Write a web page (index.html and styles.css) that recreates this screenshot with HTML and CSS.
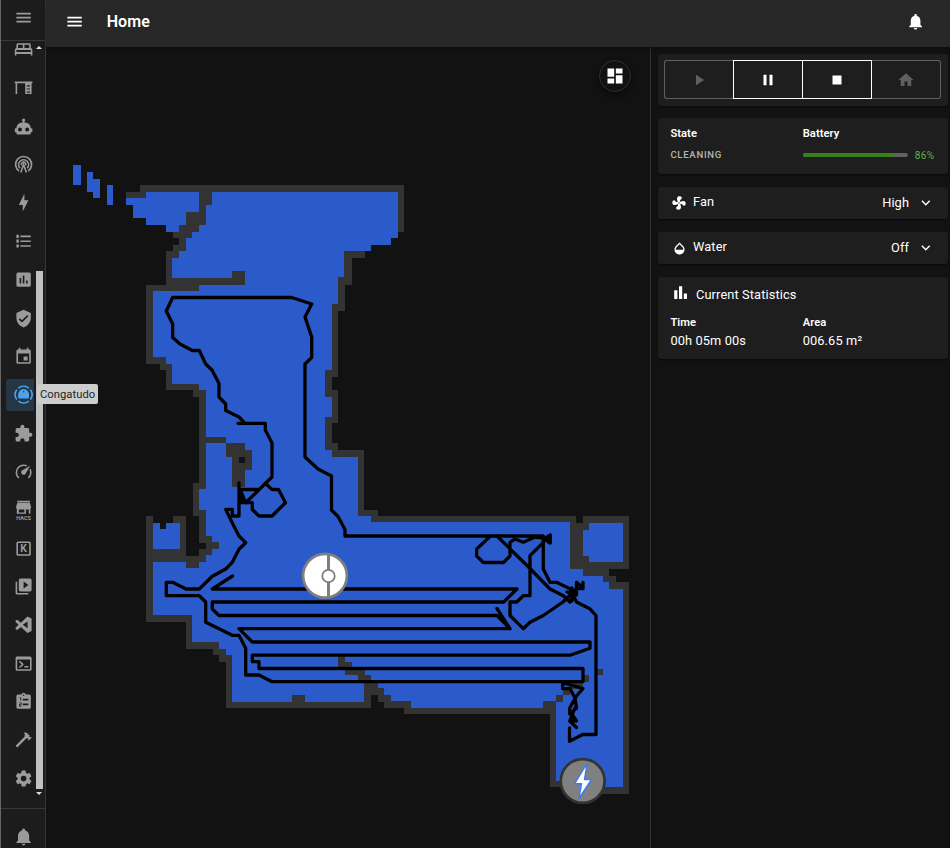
FILE: index.html
```html
<!DOCTYPE html>
<html lang="en">
<head>
<meta charset="utf-8">
<title>Home</title>
<link rel="stylesheet" href="styles.css">
</head>
<body>
<div class="app">
  <nav class="sidebar">
    <div class="menu-top"><svg class="icon" viewBox="0 0 24 24"><path d="M3 6h18v2H3V6m0 5h18v2H3v-2m0 5h18v2H3v-2Z"/></svg></div>
    <div class="nav-list">
      <ul class="items">
        <li><svg class="icon" viewBox="0 0 24 24"><path fill-rule="evenodd" d="M5 4h14a2 2 0 0 1 2 2v4a2.500 2.500 0 0 1 2 2.500v7h-2v-2H3v2H1v-7a2.500 2.500 0 0 1 2-2.500V6a2 2 0 0 1 2-2m0 2v4h6V6H5m8 0v4h6V6h-6M3 12.500v2.500h18v-2.500H3Z"/></svg></li>
        <li><svg class="icon" viewBox="0 0 24 24"><path fill-rule="evenodd" d="M1 4.500h22v2h-1V20h-8V6.500H4V20H2V6.500H1V4.500m15 4.500v1.500h4V9h-4m0 4v1.500h4V13h-4m0 4v1.500h4V17h-4Z"/></svg></li>
        <li><svg class="icon" viewBox="0 0 24 24"><path d="M12,2A2,2 0 0,1 14,4C14,4.740 13.600,5.390 13,5.730V7H14A7,7 0 0,1 21,14H22A1,1 0 0,1 23,15V18A1,1 0 0,1 22,19H21V20A2,2 0 0,1 19,22H5A2,2 0 0,1 3,20V19H2A1,1 0 0,1 1,18V15A1,1 0 0,1 2,14H3A7,7 0 0,1 10,7H11V5.730C10.400,5.390 10,4.740 10,4A2,2 0 0,1 12,2M7.500,13A2.500,2.500 0 0,0 5,15.500A2.500,2.500 0 0,0 7.500,18A2.500,2.500 0 0,0 10,15.500A2.500,2.500 0 0,0 7.500,13M16.500,13A2.500,2.500 0 0,0 14,15.500A2.500,2.500 0 0,0 16.500,18A2.500,2.500 0 0,0 19,15.500A2.500,2.500 0 0,0 16.500,13Z"/></svg></li>
        <li><svg class="icon line" viewBox="0 0 24 24"><path d="M6.200 20A10 10 0 1 1 17.800 20M7.500 16.500A6.200 6.200 0 1 1 16.500 16.500M8.500 22L12 12L15.500 22M9.700 13A2.700 2.700 0 1 1 14.300 13"/></svg></li>
        <li><svg class="icon" viewBox="0 0 24 24"><path d="M11 15H6L13 1V9H18L11 23V15Z"/></svg></li>
        <li><svg class="icon" viewBox="0 0 24 24"><path d="M3 3.500h3v4H3v-4m5 1h13v2H8v-2m-5 5h3v4H3v-4m5 1h13v2H8v-2m-5 5h3v4H3v-4m5 1h13v2H8v-2"/></svg></li>
        <li><svg class="icon" viewBox="0 0 24 24"><path fill-rule="evenodd" d="M5 3h14a2 2 0 0 1 2 2v14a2 2 0 0 1-2 2H5a2 2 0 0 1-2-2V5a2 2 0 0 1 2-2M7 10v7h2v-7H7m4-3v10h2V7h-2m4 6v4h2v-4h-2Z"/></svg></li>
        <li><svg class="icon" viewBox="0 0 24 24"><path d="M10,17L6,13L7.410,11.590L10,14.170L16.590,7.580L18,9M12,1L3,5V11C3,16.550 6.840,21.740 12,23C17.160,21.740 21,16.550 21,11V5L12,1Z"/></svg></li>
        <li><svg class="icon" viewBox="0 0 24 24"><path d="M19,19H5V8H19M16,1V3H8V1H6V3H5C3.890,3 3,3.890 3,5V19A2,2 0 0,0 5,21H19A2,2 0 0,0 21,19V5C21,3.890 20.100,3 19,3H18V1M17,12H12V17H17V12Z"/></svg></li>
        <li class="active"><svg class="icon" viewBox="0 0 24 24"><path class="ring" d="M5.500 3.800A10.500 10.500 0 0 1 18.500 3.800M20.500 5.800A10.500 10.500 0 0 1 20.500 18.200M18.500 20.200A10.500 10.500 0 0 1 5.500 20.200M3.500 18.200A10.500 10.500 0 0 1 3.500 5.800"/><path fill-rule="evenodd" d="M12 5a7 7 0 0 1 6.800 7v3.500l-1.300 1.500h-11L5.200 15.500V12A7 7 0 0 1 12 5M11.200 7.500v1.600h1.600V7.500h-1.600Z"/></svg></li>
        <li><svg class="icon" viewBox="0 0 24 24"><path d="M20.500,11H19V7C19,5.890 18.100,5 17,5H13V3.500A2.500,2.500 0 0,0 10.500,1A2.500,2.500 0 0,0 8,3.500V5H4A2,2 0 0,0 2,7V10.800H3.500C5,10.800 6.200,12 6.200,13.500C6.200,15 5,16.200 3.500,16.200H2V20A2,2 0 0,0 4,22H7.800V20.500C7.800,19 9,17.800 10.500,17.800C12,17.800 13.200,19 13.200,20.500V22H17A2,2 0 0,0 19,20V16H20.500A2.500,2.500 0 0,0 23,13.500A2.500,2.500 0 0,0 20.500,11Z"/></svg></li>
        <li><svg class="icon" viewBox="0 0 24 24"><path d="M12,16A3,3 0 0,1 9,13C9,11.880 9.610,10.900 10.500,10.390L20.210,4.770L14.680,14.350C14.180,15.330 13.170,16 12,16M12,3C13.810,3 15.500,3.500 16.970,4.320L14.870,5.530C14,5.190 13,5 12,5A8,8 0 0,0 4,13C4,15.210 4.890,17.210 6.340,18.650C6.740,19.040 6.740,19.670 6.350,20.060C5.960,20.450 5.320,20.450 4.930,20.070C3.120,18.260 2,15.760 2,13A10,10 0 0,1 12,3M22,13C22,15.760 20.880,18.260 19.070,20.070C18.680,20.450 18.050,20.450 17.660,20.060C17.270,19.670 17.270,19.040 17.660,18.650C19.110,17.200 20,15.210 20,13C20,12 19.810,11 19.460,10.100L20.670,8C21.500,9.500 22,11.180 22,13Z"/></svg></li>
        <li><svg class="icon" viewBox="0 0 24 24"><path fill-rule="evenodd" d="M4 1h16v2H4V1m0 2.800h16l1.500 5.500v1H20.500v7h-17v-7H2.500v-1L4 3.800M6 12v3.500h7V12H6m9 0v5.300h3.500V12H15Z"/><text class="tiny" x="12" y="24.500" text-anchor="middle">HACS</text></svg></li>
        <li><svg class="icon" viewBox="0 0 24 24"><rect class="outline" x="4" y="4" width="16" height="16" rx="1"/><text class="letter" x="12" y="16.700" text-anchor="middle">K</text></svg></li>
        <li><svg class="icon" viewBox="0 0 24 24"><path d="M4,6H2V20A2,2 0 0,0 4,22H18V20H4V6M20,2H8A2,2 0 0,0 6,4V16A2,2 0 0,0 8,18H20A2,2 0 0,0 22,16V4A2,2 0 0,0 20,2M12,14.500V5.500L18,10L12,14.500Z"/></svg></li>
        <li><svg class="icon" viewBox="0 0 24 24"><path fill-rule="evenodd" d="M16.800 2L22 4.500V20L16.800 22.500L8.700 15L4 18.700L2 17.700V16L5.700 12.300L2 8.700V7L4 6L8.700 9.700L16.800 2M17 8L11 12.300L17 16.700V8Z"/></svg></li>
        <li><svg class="icon" viewBox="0 0 24 24"><path d="M20,19V7H4V19H20M20,3A2,2 0 0,1 22,5V19A2,2 0 0,1 20,21H4A2,2 0 0,1 2,19V5C2,3.890 2.900,3 4,3H20M13,17V15H18V17H13M9.580,13L5.570,9H8.400L11.700,12.300C12.090,12.690 12.090,13.330 11.700,13.720L8.420,17H5.590L9.580,13Z"/></svg></li>
        <li><svg class="icon" viewBox="0 0 24 24"><path fill-rule="evenodd" d="M5 3h4.200a3 3 0 0 1 5.600 0H19a2 2 0 0 1 2 2v14a2 2 0 0 1-2 2H5a2 2 0 0 1-2-2V5a2 2 0 0 1 2-2m7 0a1 1 0 0 0 0 2a1 1 0 0 0 0-2M7 7v1h1v3h1V7H7m4 1.500v2h7v-2h-7M6.500 13v1h2v1h-2v3h3v-1h-2v-1h2v-3h-3m4.500 1.500v2h7v-2h-7Z"/></svg></li>
        <li><svg class="icon" viewBox="0 0 24 24"><path d="M2 19.630L13.430 8.200L12.720 7.500L14.140 6.070L12 3.890C13.200 2.700 15.090 2.700 16.270 3.890L19.870 7.500L18.450 8.910H21.290L22 9.620L18.450 13.210L17.740 12.500V9.620L16.270 11.040L15.560 10.330L4.130 21.760L2 19.630Z"/></svg></li>
        <li><svg class="icon" viewBox="0 0 24 24"><path d="M12,15.500A3.500,3.500 0 0,1 8.500,12A3.500,3.500 0 0,1 12,8.500A3.500,3.500 0 0,1 15.500,12A3.500,3.500 0 0,1 12,15.500M19.430,12.970C19.470,12.650 19.500,12.330 19.500,12C19.500,11.670 19.470,11.340 19.430,11L21.540,9.370C21.730,9.220 21.780,8.950 21.660,8.730L19.660,5.270C19.540,5.050 19.270,4.960 19.050,5.050L16.560,6.050C16.040,5.660 15.500,5.320 14.870,5.070L14.500,2.420C14.460,2.180 14.250,2 14,2H10C9.750,2 9.540,2.180 9.500,2.420L9.130,5.070C8.500,5.320 7.960,5.660 7.440,6.050L4.950,5.050C4.730,4.960 4.460,5.050 4.340,5.270L2.340,8.730C2.210,8.950 2.270,9.220 2.460,9.370L4.570,11C4.530,11.340 4.500,11.670 4.500,12C4.500,12.330 4.530,12.650 4.570,12.970L2.460,14.630C2.270,14.780 2.210,15.050 2.340,15.270L4.340,18.730C4.460,18.950 4.730,19.030 4.950,18.950L7.440,17.940C7.960,18.340 8.500,18.680 9.130,18.930L9.500,21.580C9.540,21.820 9.750,22 10,22H14C14.250,22 14.460,21.820 14.500,21.580L14.870,18.930C15.500,18.670 16.040,18.340 16.560,17.940L19.050,18.950C19.270,19.030 19.540,18.950 19.660,18.730L21.660,15.270C21.780,15.050 21.730,14.780 21.540,14.630L19.430,12.970Z"/></svg></li>
      </ul>
      <div class="scroll"><i class="up"></i><i class="thumb"></i><i class="down"></i></div>
      <span class="tooltip">Congatudo</span>
    </div>
    <div class="menu-bottom"><svg class="icon" viewBox="0 0 24 24"><path d="M21,19V20H3V19L5,17V11C5,7.900 7.030,5.170 10,4.290V4A2,2 0 0,1 14,4V4.290C16.970,5.170 19,7.900 19,11V17L21,19M14,21A2,2 0 0,1 10,21"/></svg></div>
  </nav>
  <div class="page">
    <header class="bar">
      <svg class="bar-icon" viewBox="0 0 24 24"><path d="M3 18h18v-2H3v2zm0-5h18v-2H3v2zm0-7v2h18V6H3z"/></svg>
      <h1>Home</h1>
      <svg class="bar-icon" viewBox="0 0 24 24"><path d="M12 22c1.100 0 2-.9 2-2h-4c0 1.100.890 2 2 2zm6-6v-5c0-3.070-1.640-5.640-4.500-6.320V4c0-.830-.670-1.500-1.500-1.500s-1.500.670-1.500 1.500v.680C7.630 5.360 6 7.920 6 11v5l-2 2v1h16v-1l-2-2z"/></svg>
    </header>
    <main class="content">
      <section class="map">
        <svg class="map-canvas" viewBox="46 47 604 801">
          <g shape-rendering="crispEdges">
            <path class="wall" d="M126 192H139.500V185.300H404.300V232H398V238H391V244.700H371V251H364.500V258H351.700V285H345V311H338V377H332V390H338V423H331.700V443H338V450H364V510H378V516H576V522.500H583V516H629V569H609V576H615.700V582.300H629V794H590V787.300H550V714.300H404.300V708H384V701.500H378V695H371V708H226V661.500H219V655H212.500V648.700H186V621.500H146V516H153V522.600H160V529.300H166V522.600H172.500V516H186V555.500H199V549H205.700V542.500H199V516H192.500V483H199V396.700H192.500V390H166V370H160V363.700H146V284.700H166V251H172.700V244.700H179.300V238H172.700V231.700H166V224.700H146V218H133V204.700H126Z"/>
            <path class="floor" d="M73 165.300H80.500V185.300H73ZM87 172H93V178.500H99.700V198H93V192H87ZM107 185.300H113V204.700H107ZM126 198H146V192H199V211.700H186V224.700H179.300V231.700H166V224.700H146V218H133V204.700H126Z"/>
            <path class="floor" d="M212.400 192H398V238H391V244.700H371V251H344.400V277.400H338V304H331.500V370H325V397H331.500V417H325V450H332V457H358V516H371V522.400H570V569H583V576H603V582.300H609V589H623V787.300H590V781H556.400V701.400H543V708H411V701.400H391V695H384V688.400H378V682H364.400V702H305V695H291.700V702H232.400V655H226V648.700H219V642H192.400V615.400H153V562H186V568.400H199V562H205.700V555.400H212.400V549H219V542.400H212.400V536H205.700V510H199V489.400H205.700V390H199V384H172.400V363.700H166V357.300H153V290.700H199V284.700H245V271H232V277.500H172.400V258H179.300V251H186V238H192.400V231.700H199V224.700H205.700V204.700H212.400Z"/>
            <path class="floor" d="M153 522.600H160V529.300H166V522.600H179.700V549H153ZM589 522.500H623V562.300H589V555.700H583V529.700H589Z"/>
            <path class="wall" d="M205 436.700H226V443H245V450H252V470H245V487H232V457H226V443H205ZM338 655H344.500V662H351.500V668.500H364.500V675H371V682H378V688H364.500V682H358V675H344.500V668.500H338ZM597 668.500H603V675H597ZM583 675H589V682H583ZM570 682H583V688.500H570ZM563 688.500H570V695H563ZM556.300 695H563V701.500H556.300Z"/>
            <path class="void" d="M239 457H245V463H239Z"/>
          </g>
          <g class="track">
            <path d="M238 423.300H265.300V430L272 443V477L245.700 502.700L240 489.500H259M239 483V516H232.300V509.300H225.700L232.300 523L239 536L245.700 542.700L239 549.300L232.300 562.300L225.700 569L212 576.500L199.300 589H186L172.700 582.300H166.300V595.700H199.300L205.700 602V622.300L232.300 635.300H239L245.700 648.300V675H259L272 681.700H583V668.500H259V661.700H252.300V655.200H570L590 648.300V642H252.300L239 628.700H510L497 608.500M510 628.700L497 615.500H219L212.300 609V602H503.700L517 589H212.300L232.500 576"/>
            <path d="M245 423.300L239 417L225.700 410.500V404L219 397V383.500L212 370L205.700 364L199.300 350.500H192.300L180 344L172.700 337.500V324L166.300 311L172.700 297.500H291.700L311.700 304L305 317L311.700 337V357.500L305 364V457L318 469L331.500 476V510L338 516.500L345 529.500V536H543.300V569L550 582.300H556.500L570 588.700L576.500 602L589.700 608.700L596 615.500V734.500H582.700L569.500 741.300V728"/>
            <path d="M265.300 483.300L272 489.500H278.500L285.500 502.700L272 516H259L252.300 509.500V502.700H240"/>
            <path d="M490 536.500L476.700 549V556L483.300 562.500H503.500L510 556V542.300L515 539L523.300 542.300L535 537L543 538M497 536L530 568.500L550 589L563.300 595.700L570 602L576.500 588.700H583V582.300V588L576.500 582.300V595L567 592M543.300 542.500L530 555.700V595.700H523.300L516.700 602H510V615.500L523.300 628.700L530 622.300L543.300 615.500L563 602L576.500 588.700M572 588V601"/>
            <path class="solid" d="M544 539L550.300 535V543ZM240 490V502H245Z"/>
            <path d="M562.700 683.300V688.700H570L575 698L576.500 708L569.700 714V708L576.500 696L583 688.500L563 682.800M570.500 712L576.500 721H569.700L576.500 727.500M575 708L569.700 721"/>
          </g>
          <circle class="robot" cx="325" cy="575.800" r="21.900"/>
          <path class="robot-line" d="M328.500 554.500V597"/>
          <circle class="robot-eye" cx="328.500" cy="576" r="6.200"/>
          <circle class="dock" cx="582.700" cy="781" r="21.900"/>
          <path class="dock-bolt" d="M587 763.500L574.700 783.700H581.500L579 798.500L591.500 779.500H584.500Z"/>
        </svg>
        <button class="fab"><svg viewBox="0 0 24 24"><path d="M3 13h8V3H3v10zm0 8h8v-6H3v6zm10 0h8V11h-8v10zm0-18v6h8V3h-8z"/></svg></button>
      </section>
      <aside class="panel">
        <div class="card controls">
          <div class="buttons">
            <button><svg viewBox="0 0 24 24"><path d="M8 5v14l11-7z"/></svg></button>
            <button class="on"><svg viewBox="0 0 24 24"><path d="M6 19h4V5H6v14zm8-14v14h4V5h-4z"/></svg></button>
            <button class="on"><svg viewBox="0 0 24 24"><path d="M6 6h12v12H6z"/></svg></button>
            <button><svg viewBox="0 0 24 24"><path d="M10 20v-6h4v6h5v-8h3L12 3 2 12h3v8z"/></svg></button>
          </div>
        </div>
        <div class="card status">
          <div class="col"><b>State</b><span class="state">CLEANING</span></div>
          <div class="col"><b>Battery</b><div class="battery"><div class="meter"><i style="width:86%"></i></div><span>86%</span></div></div>
        </div>
        <div class="card row">
          <svg class="row-icon" viewBox="0 0 24 24"><path d="M12,11A1,1 0 0,0 11,12A1,1 0 0,0 12,13A1,1 0 0,0 13,12A1,1 0 0,0 12,11M12.500,2C17,2 17.110,5.570 14.750,6.750C13.760,7.240 13.320,8.290 13.130,9.220C13.610,9.420 14.030,9.730 14.350,10.130C18.050,8.130 22.030,8.920 22.030,12.500C22.030,17 18.460,17.100 17.280,14.730C16.780,13.740 15.720,13.300 14.790,13.110C14.590,13.590 14.280,14 13.880,14.340C15.870,18.030 15.080,22 11.500,22C7,22 6.910,18.420 9.270,17.240C10.250,16.750 10.690,15.710 10.890,14.790C10.400,14.590 9.970,14.270 9.650,13.870C5.960,15.850 2,15.070 2,11.500C2,7 5.560,6.890 6.740,9.260C7.240,10.250 8.290,10.680 9.220,10.870C9.410,10.390 9.730,9.970 10.140,9.650C8.150,5.960 8.940,2 12.500,2Z"/></svg>
          <span class="name">Fan</span><span class="value">High</span>
          <svg class="chevron" viewBox="0 0 24 24"><path d="M16.590 8.590 12 13.170 7.410 8.590 6 10l6 6 6-6z"/></svg>
        </div>
        <div class="card row">
          <svg class="row-icon drop" viewBox="0 0 24 24"><path d="M17.660 8L12 2.350 6.340 8C4.780 9.560 4 11.640 4 13.640s.780 4.110 2.340 5.670 3.610 2.350 5.660 2.350 4.100-.790 5.660-2.350S20 15.640 20 13.640 19.220 9.560 17.660 8zM6 14c.010-2 .620-3.270 1.760-4.400L12 5.270l4.240 4.380C17.380 10.770 17.990 12 18 14H6z"/></svg>
          <span class="name">Water</span><span class="value">Off</span>
          <svg class="chevron" viewBox="0 0 24 24"><path d="M16.590 8.590 12 13.170 7.410 8.590 6 10l6 6 6-6z"/></svg>
        </div>
        <div class="card stats">
          <div class="stats-head"><svg viewBox="0 0 24 24"><path d="M4 9h4v11H4zm12 4h4v7h-4zm-6-9h4v16h-4z"/></svg><span>Current Statistics</span></div>
          <div class="stats-cols">
            <div class="col"><b>Time</b><span>00h 05m 00s</span></div>
            <div class="col"><b>Area</b><span>006.65 m²</span></div>
          </div>
        </div>
      </aside>
    </main>
  </div>
</div>
</body>
</html>
```
FILE: styles.css
```css
* { box-sizing: border-box; }
body { margin: 0; background: #121212; color: #fff; font-family: Roboto, "Liberation Sans", sans-serif; overflow: hidden; }
button { font: inherit; color: inherit; padding: 0; background: none; }
svg { display: block; fill: currentColor; }
.app { display: flex; width: 950px; height: 848px; }

.sidebar { width: 46px; flex: none; display: flex; flex-direction: column; background: #1c1c1c; border-left: 1px solid #666; border-right: 1px solid #373737; color: #9b9b9b; }
.icon { width: 19.200px; height: 19.200px; overflow: visible; }
.line { fill: none; stroke: currentColor; stroke-width: 2; }
.ring { fill: none; stroke: currentColor; stroke-width: 2; }
.outline { fill: none; stroke: currentColor; stroke-width: 2; }
.letter { font: bold 13px Roboto, sans-serif; }
.tiny { font: bold 7px Roboto, sans-serif; }
.menu-top { height: 41px; flex: none; padding: 8px 0 0 13px; border-bottom: 1px solid #373737; }
.nav-list { position: relative; flex: 1; min-height: 0; display: flex; overflow: visible; }
.items { list-style: none; margin: 0; padding: 0 0 0 5px; width: 33px; height: 767px; overflow: hidden; }
.items li { width: 28px; height: 32px; margin-bottom: 6.350px; padding: 6.400px 0 0 8px; border-radius: 3px 0 0 3px; }
.items li:first-child { margin-top: -7.300px; }
.items .active { background: #263644; color: #4ba3ef; }
.scroll { width: 11px; display: flex; flex-direction: column; align-items: center; margin-left: -.5px; }
.up { margin-top: 5px; border: 3px solid transparent; border-top: 0; border-bottom: 3px solid #ddd; }
.thumb { width: 7px; height: 518px; margin-top: 222px; background: #c1c1c1; }
.down { margin-top: 3px; border: 3px solid transparent; border-bottom: 0; border-top: 3px solid #ddd; }
.tooltip { position: absolute; left: 36px; top: 343px; height: 20px; line-height: 21px; padding: 0 3px; border-radius: 2px; background: #cdcdcd; color: #252525; font-size: 11.200px; letter-spacing: .05px; }
.menu-bottom { height: 40px; flex: none; border-top: 1px solid #373737; padding: 18px 0 0 13px; }

.page { flex: 1; display: flex; flex-direction: column; min-width: 0; }
.bar { position: relative; z-index: 1; height: 47px; flex: none; display: flex; align-items: center; padding: 0 25px 4px 19px; background: #272727; box-shadow: 0 2px 4px rgba(0,0,0,.35); }
.bar h1 { flex: 1; margin: 0 0 0 22.500px; font-size: 16px; font-weight: 600; letter-spacing: .08px; line-height: 20px; }
.bar-icon { width: 19.200px; height: 19.200px; }
.content { flex: 1; display: flex; min-height: 0; }
.map { position: relative; width: 604px; flex: none; }
.map-canvas { width: 604px; height: 801px; }
.wall { fill: #333; }
.floor { fill: #2b5bca; }
.void { fill: #121212; }
.track { fill: none; stroke: #000; stroke-width: 3.300; stroke-linecap: round; stroke-linejoin: round; }
.track .solid { fill: #000; }
.robot { fill: #fff; stroke: #7f7f7f; stroke-width: 2.700; }
.robot-line { fill: none; stroke: #7f7f7f; stroke-width: 3; }
.robot-eye { fill: #fff; stroke: #7f7f7f; stroke-width: 1.800; }
.dock { fill: #808080; stroke: #333; stroke-width: 2.700; }
.dock-bolt { fill: #fff; stroke: #3c7cf2; stroke-width: 1.400; }
.fab { position: absolute; left: 553px; top: 13px; width: 32px; height: 32px; border: 1px solid #2e2e2e; border-radius: 50%; background: #121212; display: grid; place-items: center; box-shadow: 0 3px 6px rgba(0,0,0,.5); }
.fab svg { width: 20px; height: 20px; margin-left: .5px; }

.panel { flex: 1; display: flex; flex-direction: column; gap: 13px; border-left: 1px solid #323232; padding: 7px 2px 0 7px; font-size: 12.800px; letter-spacing: .12px; }
.card { background: #1e1e1e; border-radius: 3px; box-shadow: 0 1px 2px rgba(0,0,0,.55); }
.controls { height: 52px; padding: 6px 7px 0 6px; }
.buttons { display: grid; grid-template-columns: 70px 69px 69px 69px; height: 39px; }
.buttons button { display: grid; place-items: center; border: 1px solid #606060; color: #606060; }
.buttons button:first-child { border-radius: 3px 0 0 3px; border-right: 0; }
.buttons button:last-child { border-radius: 0 3px 3px 0; border-left: 0; }
.buttons .on { border-color: #fff; color: #fff; margin-left: -1px; }
.buttons svg { width: 18px; height: 18px; }
.buttons button:first-child svg { margin-right: 1.500px; }
.buttons .on svg { margin-left: .5px; }
.buttons button:last-child svg { margin-left: .5px; }
.col { display: flex; flex-direction: column; }
.col b { padding-top: 1px; font-size: 11.200px; font-weight: 600; line-height: 17px; letter-spacing: .04px; }
.status { height: 56px; margin-top: -1px; display: grid; grid-template-columns: 132.300px 1fr; padding: 6px 12px 6px 12.400px; }
.state { margin-top: 6px; font-size: 9.600px; font-weight: 500; line-height: 14px; color: #b4b4b4; letter-spacing: .7px; }
.battery { display: flex; align-items: center; margin-top: 6px; height: 14px; gap: 7px; font-size: 10px; color: #5fb04a; letter-spacing: .4px; }
.meter { width: 105px; height: 4px; border-radius: 2px; background: #616161; overflow: hidden; }
.meter i { display: block; height: 4px; background: #37801a; }
.row { height: 32px; display: flex; align-items: center; padding: 0 13.500px 0 13px; }
.row-icon { width: 16px; height: 16px; margin-right: 6px; }
.drop { width: 15px; height: 15px; margin: 1px 6px 0 1px; }
.name { flex: 1; padding-bottom: 3px; }
.value { padding-bottom: 1px; margin-right: 7.800px; }
.chevron { width: 17.600px; height: 17.600px; margin-top: -1px; }
.stats { height: 82px; padding: 8px 12px 8px 12.400px; }
.stats-head { display: flex; align-items: center; height: 19px; }
.stats-head svg { width: 19.200px; height: 19.200px; margin: -3px 5.600px 0 .8px; }
.stats-cols { display: grid; grid-template-columns: 132.300px 1fr; margin-top: 9px; line-height: 19px; }
```
